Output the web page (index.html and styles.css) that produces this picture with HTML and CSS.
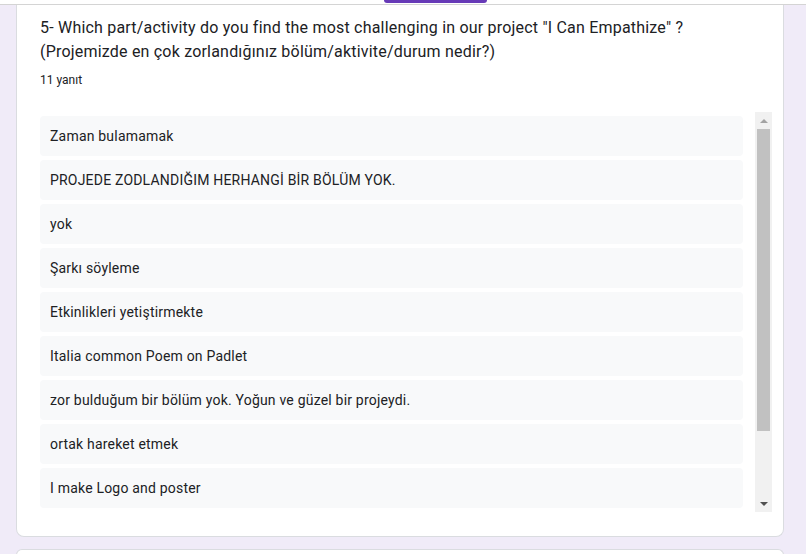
FILE: index.html
```html
<!DOCTYPE html>
<html lang="tr">
<head>
  <meta charset="UTF-8">
  <meta name="viewport" content="width=device-width, initial-scale=1.0">
  <title>Yanıtlar</title>
  <link rel="stylesheet" href="styles.css">
</head>
<body>
  <div class="top-bar">
    <div class="tab-indicator"></div>
  </div>

  <div class="question-card">
    <h2 class="question-title">5- Which part/activity do you find the most challenging in our project "I Can Empathize" ?<br>(Projemizde en çok zorlandığınız bölüm/aktivite/durum nedir?)</h2>
    <p class="answer-count">11 yanıt</p>

    <div class="answers">
      <div class="answer-list">
        <div class="answer-item">Zaman bulamamak</div>
        <div class="answer-item">PROJEDE ZODLANDIĞIM HERHANGİ BİR BÖLÜM YOK.</div>
        <div class="answer-item">yok</div>
        <div class="answer-item">Şarkı söyleme</div>
        <div class="answer-item">Etkinlikleri yetiştirmekte</div>
        <div class="answer-item">Italia common Poem on Padlet</div>
        <div class="answer-item">zor bulduğum bir bölüm yok. Yoğun ve güzel bir projeydi.</div>
        <div class="answer-item">ortak hareket etmek</div>
        <div class="answer-item">I make Logo and poster</div>
      </div>
      <div class="scrollbar">
        <div class="scroll-btn up"><span class="arrow-up"></span></div>
        <div class="scroll-track">
          <div class="scroll-thumb"></div>
        </div>
        <div class="scroll-btn down"><span class="arrow-down"></span></div>
      </div>
    </div>
  </div>

  <div class="question-card next"></div>
</body>
</html>
```

FILE: styles.css
```css
* {
  margin: 0;
  padding: 0;
  box-sizing: border-box;
}

body {
  font-family: Roboto, 'Liberation Sans', Arial, sans-serif;
  background: #f0ebf8;
  color: #202124;
  height: 554px;
  overflow: hidden;
}

.top-bar {
  height: 5px;
  background: #ffffff;
  border-bottom: 1px solid #d4d4d4;
}

.tab-indicator {
  width: 103px;
  height: 3px;
  margin-left: 384px;
  background: #673ab7;
  border-radius: 0 0 3px 3px;
}

.question-card {
  margin: 0 22px 0 16px;
  width: 768px;
  background: #ffffff;
  border: 1px solid #dadce0;
  border-top: none;
  border-radius: 0 0 8px 8px;
  padding: 11px 11px 24px 23px;
}

.question-card.next {
  margin-top: 12px;
  height: 6px;
  padding: 0;
  border-top: 1px solid #dadce0;
  border-bottom: none;
  border-radius: 8px 8px 0 0;
}

.question-title {
  font-size: 16px;
  font-weight: 400;
  line-height: 24px;
  letter-spacing: 0.2px;
  color: #202124;
}

.answer-count {
  font-size: 12px;
  line-height: 16px;
  margin-top: 8px;
  color: #202124;
}

.answers {
  display: flex;
  gap: 12px;
  height: 400px;
  margin-top: 24px;
}

.answer-list {
  flex: 1;
  padding-top: 4px;
  overflow: hidden;
}

.answer-item {
  height: 40px;
  margin-bottom: 4px;
  padding: 0 10px;
  display: flex;
  align-items: center;
  background: #f8f9fa;
  border-radius: 4px;
  font-size: 14px;
  letter-spacing: 0.2px;
}

.scrollbar {
  width: 17px;
  background: #f1f1f1;
  display: flex;
  flex-direction: column;
}

.scroll-btn {
  height: 17px;
  display: flex;
  align-items: center;
  justify-content: center;
}

.arrow-up {
  width: 0;
  height: 0;
  border-left: 4px solid transparent;
  border-right: 4px solid transparent;
  border-bottom: 4px solid #a3a3a3;
}

.arrow-down {
  width: 0;
  height: 0;
  border-left: 4px solid transparent;
  border-right: 4px solid transparent;
  border-top: 4px solid #505050;
}

.scroll-track {
  flex: 1;
  padding: 0 2px;
}

.scroll-thumb {
  height: 302px;
  background: #c1c1c1;
}
```
